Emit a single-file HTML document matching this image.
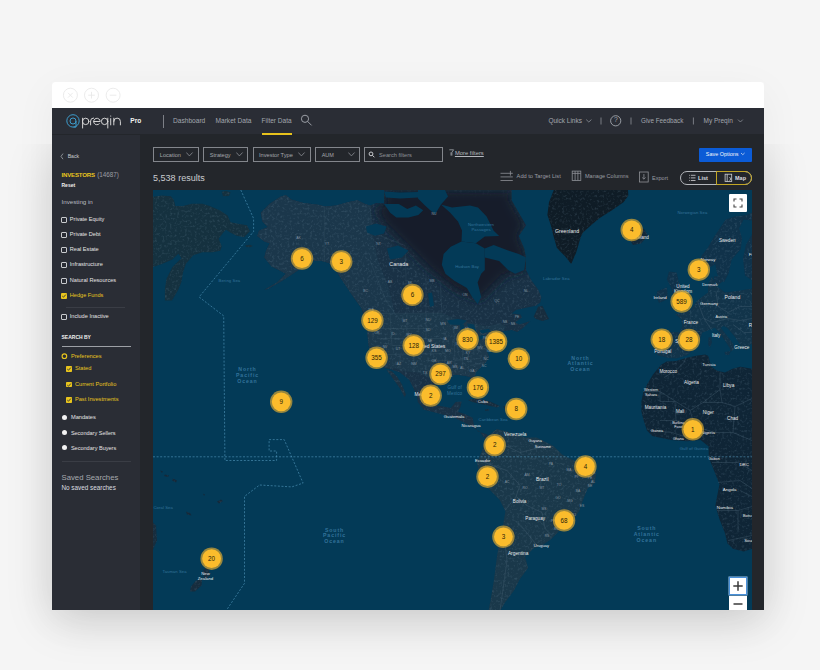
<!DOCTYPE html>
<html><head><meta charset="utf-8">
<style>
*{margin:0;padding:0;box-sizing:border-box}
html,body{width:820px;height:670px;overflow:hidden;background:#f5f5f5;font-family:"Liberation Sans",sans-serif}
.a{position:absolute}
.t{position:absolute;white-space:nowrap;line-height:1}
</style></head><body>
<div class="a" style="left:52px;top:82px;width:712px;height:528px;box-shadow:0 10px 40px rgba(0,0,0,.05)"></div>
<div class="a" style="left:52px;top:144px;width:712px;height:466px;box-shadow:0 10px 44px rgba(0,0,0,.15);clip-path:inset(0 -80px -80px -80px)"></div>
<div class="a" style="left:52px;top:82px;width:712px;height:27px;background:#fff;border-radius:4px 4px 0 0"></div>
<svg class="a" style="left:52px;top:82px" width="80" height="27" viewBox="52 82 80 27">
<g fill="none" stroke="#e9e9e9" stroke-width="0.9">
<circle cx="70.4" cy="95.2" r="7"/><circle cx="91.5" cy="95.2" r="7"/><circle cx="113.1" cy="95.2" r="7"/>
<path d="M68,92.8 L72.8,97.6 M72.8,92.8 L68,97.6 M91.5,91.9 V98.5 M88.2,95.2 H94.8 M109.8,95.2 H116.4"/>
</g></svg>
<div class="a" style="left:52px;top:108px;width:712px;height:26px;background:#2a2d35"></div>
<div class="a" style="left:52px;top:134.4px;width:712px;height:1px;background:#23262b"></div>
<div class="a" style="left:52px;top:135px;width:88px;height:475px;background:#2a2d35"></div>
<div class="a" style="left:140px;top:135px;width:624px;height:475px;background:#23262b"></div>
<svg class="a" style="left:60px;top:110px" width="70" height="22" viewBox="60 110 70 22">
<g fill="none" stroke="#3d9ccc" stroke-width="1">
<circle cx="73" cy="120.9" r="6.2"/>
<circle cx="73" cy="121" r="3"/>
<path d="M76,121 V127.1 H73.5"/>
</g>
<g fill="none" stroke="#dcdcdc" stroke-width="0.95" stroke-linecap="round">
<path d="M82.6,118.2 V128"/><circle cx="85.7" cy="121.4" r="3.2"/>
<path d="M90.6,124.9 V121 A3,3 0 0 1 93.6,118"/>
<path d="M93.8,121.5 H100.2 A3.25,3.25 0 1 0 99.3,123.8"/>
<circle cx="104.6" cy="121.4" r="3.2"/><path d="M107.8,118.2 V128"/>
<path d="M110.7,118.6 V124.9"/><circle cx="110.7" cy="116" r="0.6" fill="#e6e6e6" stroke="none"/>
<path d="M113.8,118.2 V124.9 M113.8,121.4 A3.3,3.3 0 0 1 120.4,121.4 V124.9"/>
</g></svg>
<div class="t" style="left:130.30px;top:118.01px;font-size:6.6px;color:#f2f2f2;font-weight:700;">Pro</div>
<div class="a" style="left:163px;top:114.5px;width:1px;height:13px;background:#7d8087"></div>
<div class="t" style="left:173.00px;top:118.01px;font-size:6.6px;color:#a3a7ae;font-weight:400;">Dashboard</div>
<div class="t" style="left:215.50px;top:118.01px;font-size:6.6px;color:#a3a7ae;font-weight:400;">Market Data</div>
<div class="t" style="left:261.60px;top:118.10px;font-size:6.5px;color:#a3a7ae;font-weight:400;">Filter Data</div>
<div class="a" style="left:261.6px;top:133px;width:30px;height:1.5px;background:#e7c21c"></div>
<svg class="a" style="left:298px;top:112px" width="18" height="16" viewBox="298 112 18 16">
<g fill="none" stroke="#9a9ea5" stroke-width="1"><circle cx="305" cy="118.8" r="3.6"/><path d="M307.6,121.4 L311.6,125.4"/></g></svg>
<div class="t" style="left:548.40px;top:118.10px;font-size:6.5px;color:#a3a7ae;font-weight:400;">Quick Links</div>
<svg class="a" style="left:540px;top:110px" width="220" height="22" viewBox="540 110 220 22">
<g fill="none" stroke="#8d9198" stroke-width="0.8">
<path d="M586.2,119.6 L588.8,122 L591.4,119.6"/>
<path d="M738,119.6 L740.4,122 L742.8,119.6"/>
</g>
<g fill="none" stroke="#a3a7ae" stroke-width="0.9">
<circle cx="615.7" cy="120.8" r="5.1"/>
</g>
<path d="M601,117.5 V124.5 M631,117.5 V124.5 M693.4,117.5 V124.5" stroke="#8d9198" stroke-width="0.8"/>
</svg>
<div class="t" style="left:613.90px;top:117.44px;font-size:6.8px;color:#a3a7ae;font-weight:400;">?</div>
<div class="t" style="left:641.00px;top:118.27px;font-size:6.3px;color:#a3a7ae;font-weight:400;">Give Feedback</div>
<div class="t" style="left:703.50px;top:118.10px;font-size:6.5px;color:#a3a7ae;font-weight:400;">My Preqin</div>
<svg class="a" style="left:58px;top:150px" width="10" height="12" viewBox="58 150 10 12">
<path d="M63,153.6 L61,156.4 L63,159.2" fill="none" stroke="#a0a4aa" stroke-width="0.8"/></svg>
<div class="t" style="left:67.70px;top:153.94px;font-size:5.15px;color:#c9cbcf;font-weight:400;">Back</div>
<div class="t" style="left:61.50px;top:172.44px;font-size:6.1px;color:#e9c51d;font-weight:700;letter-spacing:-0.2px">INVESTORS</div>
<div class="t" style="left:97.20px;top:172.27px;font-size:6.3px;color:#9b9ea4;font-weight:400;">(14687)</div>
<div class="t" style="left:61.50px;top:183.07px;font-size:5.0px;color:#f0f0f0;font-weight:700;">Reset</div>
<div class="t" style="left:61.50px;top:199.35px;font-size:6.2px;color:#b9bcc1;font-weight:400;">Investing in</div>
<div class="a" style="left:61px;top:216.5px;width:6px;height:6px;border:0.9px solid #c8cacd;border-radius:1px"></div>
<div class="t" style="left:69.80px;top:216.66px;font-size:5.6px;color:#e4e4e4;font-weight:400;">Private Equity</div>
<div class="a" style="left:61px;top:231.6px;width:6px;height:6px;border:0.9px solid #c8cacd;border-radius:1px"></div>
<div class="t" style="left:69.80px;top:231.76px;font-size:5.6px;color:#e4e4e4;font-weight:400;">Private Debt</div>
<div class="a" style="left:61px;top:247.0px;width:6px;height:6px;border:0.9px solid #c8cacd;border-radius:1px"></div>
<div class="t" style="left:69.80px;top:247.16px;font-size:5.6px;color:#e4e4e4;font-weight:400;">Real Estate</div>
<div class="a" style="left:61px;top:262.09999999999997px;width:6px;height:6px;border:0.9px solid #c8cacd;border-radius:1px"></div>
<div class="t" style="left:69.80px;top:262.26px;font-size:5.6px;color:#e4e4e4;font-weight:400;">Infrastructure</div>
<div class="a" style="left:61px;top:277.5px;width:6px;height:6px;border:0.9px solid #c8cacd;border-radius:1px"></div>
<div class="t" style="left:69.80px;top:277.66px;font-size:5.6px;color:#e4e4e4;font-weight:400;">Natural Resources</div>
<div class="a" style="left:61px;top:292.8px;width:6px;height:6px;background:#e9c51d;border-radius:1px"></div>
<svg class="a" style="left:61px;top:292.8px" width="6" height="6" viewBox="0 0 6 6"><path d="M1.3,3.1 L2.5,4.2 L4.8,1.6" fill="none" stroke="#2b2e37" stroke-width="0.9"/></svg>
<div class="t" style="left:69.80px;top:292.96px;font-size:5.6px;color:#e9c51d;font-weight:400;">Hedge Funds</div>
<div class="a" style="left:66px;top:307px;width:59px;height:1px;background:#3a3d45"></div>
<div class="a" style="left:61px;top:314.09999999999997px;width:6px;height:6px;border:0.9px solid #c8cacd;border-radius:1px"></div>
<div class="t" style="left:69.80px;top:314.26px;font-size:5.6px;color:#e4e4e4;font-weight:400;">Include Inactive</div>
<div class="t" style="left:61.50px;top:335.37px;font-size:5.0px;color:#f0f0f0;font-weight:700;">SEARCH BY</div>
<div class="a" style="left:61.5px;top:345.5px;width:69px;height:1.2px;background:#9da0a6"></div>
<svg class="a" style="left:60px;top:352px" width="9" height="9" viewBox="60 352 9 9"><circle cx="64.4" cy="356.2" r="2.3" fill="none" stroke="#e9c51d" stroke-width="1.1"/></svg>
<div class="t" style="left:70.90px;top:353.67px;font-size:5.7px;color:#e9c51d;font-weight:400;">Preferences</div>
<div class="a" style="left:65.7px;top:366.20000000000005px;width:5.9px;height:5.9px;background:#e9c51d;border-radius:0.8px"></div>
<svg class="a" style="left:65.7px;top:366.20000000000005px" width="6" height="6" viewBox="0 0 6 6"><path d="M1.3,3.1 L2.5,4.2 L4.8,1.6" fill="none" stroke="#2b2e37" stroke-width="0.9"/></svg>
<div class="t" style="left:74.90px;top:366.47px;font-size:5.7px;color:#e9c51d;font-weight:400;">Stated</div>
<div class="a" style="left:65.7px;top:381.5px;width:5.9px;height:5.9px;background:#e9c51d;border-radius:0.8px"></div>
<svg class="a" style="left:65.7px;top:381.5px" width="6" height="6" viewBox="0 0 6 6"><path d="M1.3,3.1 L2.5,4.2 L4.8,1.6" fill="none" stroke="#2b2e37" stroke-width="0.9"/></svg>
<div class="t" style="left:74.90px;top:381.77px;font-size:5.7px;color:#e9c51d;font-weight:400;">Current Portfolio</div>
<div class="a" style="left:65.7px;top:396.8px;width:5.9px;height:5.9px;background:#e9c51d;border-radius:0.8px"></div>
<svg class="a" style="left:65.7px;top:396.8px" width="6" height="6" viewBox="0 0 6 6"><path d="M1.3,3.1 L2.5,4.2 L4.8,1.6" fill="none" stroke="#2b2e37" stroke-width="0.9"/></svg>
<div class="t" style="left:74.90px;top:397.07px;font-size:5.7px;color:#e9c51d;font-weight:400;">Past Investments</div>
<div class="a" style="left:61.7px;top:414.5px;width:5.4px;height:5.4px;background:#f2f2f2;border-radius:50%"></div>
<div class="t" style="left:70.90px;top:415.07px;font-size:5.7px;color:#e4e4e4;font-weight:400;">Mandates</div>
<div class="a" style="left:61.7px;top:429.8px;width:5.4px;height:5.4px;background:#f2f2f2;border-radius:50%"></div>
<div class="t" style="left:70.90px;top:430.54px;font-size:5.5px;color:#e4e4e4;font-weight:400;">Secondary Sellers</div>
<div class="a" style="left:61.7px;top:445.1px;width:5.4px;height:5.4px;background:#f2f2f2;border-radius:50%"></div>
<div class="t" style="left:70.90px;top:445.80px;font-size:5.55px;color:#e4e4e4;font-weight:400;">Secondary Buyers</div>
<div class="a" style="left:61.5px;top:461.2px;width:69px;height:1px;background:#3a3d45"></div>
<div class="t" style="left:61.50px;top:473.84px;font-size:7.75px;color:#a6a9ae;font-weight:400;">Saved Searches</div>
<div class="t" style="left:61.50px;top:484.82px;font-size:6.35px;color:#dcdde0;font-weight:400;">No saved searches</div>
<div class="a" style="left:153px;top:147.3px;width:45.80000000000001px;height:14.6px;border:1px solid #83868c"></div>
<div class="t" style="left:159.80px;top:152.96px;font-size:5.6px;color:#a3a6ab;font-weight:400;">Location</div>
<svg class="a" style="left:186px;top:151px" width="8" height="7" viewBox="0 0 8 7"><path d="M0.3,1.5 L3.4,4.9 L6.6,1.5" fill="none" stroke="#8e9197" stroke-width="0.8"/></svg>
<div class="a" style="left:203px;top:147.3px;width:45px;height:14.6px;border:1px solid #83868c"></div>
<div class="t" style="left:209.80px;top:152.96px;font-size:5.6px;color:#a3a6ab;font-weight:400;">Strategy</div>
<svg class="a" style="left:235.7px;top:151px" width="8" height="7" viewBox="0 0 8 7"><path d="M0.3,1.5 L3.4,4.9 L6.6,1.5" fill="none" stroke="#8e9197" stroke-width="0.8"/></svg>
<div class="a" style="left:252.6px;top:147.3px;width:58.00000000000003px;height:14.6px;border:1px solid #83868c"></div>
<div class="t" style="left:258.90px;top:152.87px;font-size:5.7px;color:#a3a6ab;font-weight:400;">Investor Type</div>
<svg class="a" style="left:298.4px;top:151px" width="8" height="7" viewBox="0 0 8 7"><path d="M0.3,1.5 L3.4,4.9 L6.6,1.5" fill="none" stroke="#8e9197" stroke-width="0.8"/></svg>
<div class="a" style="left:315.4px;top:147.3px;width:44.400000000000034px;height:14.6px;border:1px solid #83868c"></div>
<div class="t" style="left:321.70px;top:153.04px;font-size:5.5px;color:#a3a6ab;font-weight:400;">AUM</div>
<svg class="a" style="left:348px;top:151px" width="8" height="7" viewBox="0 0 8 7"><path d="M0.3,1.5 L3.4,4.9 L6.6,1.5" fill="none" stroke="#8e9197" stroke-width="0.8"/></svg>
<div class="a" style="left:364.4px;top:147.3px;width:78.3px;height:14.6px;border:1px solid #83868c"></div>
<svg class="a" style="left:367px;top:150px" width="10" height="10" viewBox="367 150 10 10"><g fill="none" stroke="#c9cbcf" stroke-width="1"><circle cx="371" cy="153.9" r="1.9"/><path d="M372.4,155.3 L374.4,157.3"/></g></svg>
<div class="t" style="left:379.00px;top:153.12px;font-size:5.65px;color:#8e9197;font-weight:400;">Search filters</div>
<svg class="a" style="left:448px;top:148px" width="7" height="9" viewBox="448 148 7 9"><path d="M449.3,149.8 H453.6 L451.9,152.3 V155.6 M451,152.3 V155.6" fill="none" stroke="#b5b8bd" stroke-width="0.7"/></svg>
<div class="t" style="left:454.90px;top:150.95px;font-size:5.85px;color:#b5b8bd;font-weight:400;text-decoration:underline;text-underline-offset:1px">More filters</div>
<div class="a" style="left:699px;top:147.5px;width:53px;height:14px;background:#0b5bd6;border-radius:1px"></div>
<div class="t" style="left:705.80px;top:152.29px;font-size:5.45px;color:#f4f6fa;font-weight:400;">Save Options</div>
<svg class="a" style="left:740px;top:152px" width="6" height="5" viewBox="740 152 6 5"><path d="M741,153 L742.8,154.7 L744.6,153" fill="none" stroke="#dfe6f5" stroke-width="0.7"/></svg>
<div class="t" style="left:153.00px;top:174.24px;font-size:9.05px;color:#c9cbcf;font-weight:400;">5,538 results</div>
<svg class="a" style="left:498px;top:168px" width="180" height="18" viewBox="498 168 180 18">
<g fill="none" stroke="#8e9197" stroke-width="0.8">
<path d="M500.5,173.3 H508 M500.5,176.9 H512.8 M500.5,180.5 H512.8 M510.4,170.9 V175.6 M508,173.3 H512.8"/>
<rect x="572.2" y="171.1" width="8.6" height="9.4"/><path d="M575.1,171.1 V180.5 M577.9,171.1 V180.5 M572.2,173.4 H580.8"/>
<rect x="639.6" y="172" width="8.6" height="10"/><path d="M643.9,174 V179 M642.2,177.5 L643.9,179.2 L645.6,177.5"/>
</g></svg>
<div class="t" style="left:516.60px;top:173.77px;font-size:5.7px;color:#9a9da3;font-weight:400;">Add to Target List</div>
<div class="t" style="left:585.00px;top:173.90px;font-size:5.55px;color:#9a9da3;font-weight:400;">Manage Columns</div>
<div class="t" style="left:652.00px;top:175.50px;font-size:5.55px;color:#9a9da3;font-weight:400;">Export</div>
<div class="a" style="left:679.8px;top:171.3px;width:72.1px;height:13.5px;border:1px solid #b4b7bc;border-radius:7px"></div>
<div class="a" style="left:715.7px;top:171.3px;width:36.2px;height:13.5px;border:1px solid #c2a625;border-radius:0 7px 7px 0"></div>
<svg class="a" style="left:686px;top:172px" width="50" height="12" viewBox="686 172 50 12">
<g fill="none" stroke="#d0d2d5" stroke-width="0.8">
<path d="M691,175.3 H695.5 M691,177.9 H695.5 M691,180.5 H695.5"/>
<path d="M689.2,175.3 H690.2 M689.2,177.9 H690.2 M689.2,180.5 H690.2"/>
<rect x="725.1" y="174.2" width="6.6" height="7.4"/><path d="M727.2,174.2 V181.6 M729.3,177.5 A1.4,1.4 0 1 1 729.3,180.3"/>
</g></svg>
<div class="t" style="left:698.00px;top:175.86px;font-size:5.6px;color:#dcdde0;font-weight:700;">List</div>
<div class="t" style="left:735.00px;top:175.94px;font-size:5.5px;color:#dcdde0;font-weight:700;">Map</div>
<div class="a" style="left:153px;top:189.5px;width:599px;height:420.5px;background:#033a57"></div>
<svg class="a" style="left:153px;top:189.5px" width="599" height="420.5" viewBox="153 189.5 599 420.5">
<defs><filter id="tex" x="0" y="0" width="1" height="1" color-interpolation-filters="sRGB"><feTurbulence type="fractalNoise" baseFrequency="0.4" numOctaves="2" seed="7" result="n"/><feColorMatrix in="n" type="matrix" values="0 0 0 0 0.50  0 0 0 0 0.62  0 0 0 0 0.70  0 0 0 0.55 -0.28" result="c"/><feComposite in="c" in2="SourceAlpha" operator="in" result="m"/><feMerge><feMergeNode in="SourceGraphic"/><feMergeNode in="m"/></feMerge></filter></defs>
<path d="M153.0,196.2 L162.0,195.0 L170.9,195.7 L173.9,199.4 L175.4,205.4 L182.9,205.4 L191.8,203.2 L202.3,203.2 L209.7,205.4 L220.2,209.9 L227.6,215.1 L230.6,221.8 L238.1,223.3 L247.0,224.8 L250.0,230.8 L244.0,236.8 L236.6,235.3 L230.6,232.3 L226.1,229.3 L223.1,232.3 L218.7,238.3 L221.7,245.7 L220.2,250.2 L212.7,251.7 L202.3,251.7 L193.3,254.7 L185.8,263.6 L182.9,272.6 L181.4,281.5 L178.4,289.0 L172.0,300.0 L164.9,300.0 L164.9,289.0 L166.4,278.6 L172.4,266.6 L181.4,257.7 L178.4,253.2 L172.4,259.1 L162.0,263.6 L153.0,266.6Z" fill="#15313f"  filter="url(#tex)"/>
<path d="M221.7,191.2 L226.0,190.5 L230.6,192.0 L229.0,195.5 L223.0,195.7Z" fill="#15313f"  filter="url(#tex)"/>
<path d="M245.5,244.8 L250.0,244.2 L253.0,245.5 L250.0,246.8 L246.0,246.5Z" fill="#15313f"  filter="url(#tex)"/>
<path d="M260.7,212.3 L269.7,203.3 L280.4,196.2 L285.8,194.4 L291.2,198.9 L303.7,202.4 L318.1,204.2 L325.2,206.0 L336.0,205.1 L348.5,201.5 L357.5,199.7 L364.6,203.3 L370.0,205.1 L376.0,202.5 L384.1,203.0 L384.1,189.5 L511.6,189.5 L511.6,199.7 L526.0,224.8 L518.8,235.6 L524.2,248.1 L526.0,257.0 L526.0,269.6 L531.5,280.0 L538.0,288.8 L541.4,296.5 L540.3,302.0 L535.9,305.2 L524.9,307.4 L516.1,309.6 L511.7,312.9 L520.5,314.0 L522.0,317.0 L515.0,322.0 L519.4,323.9 L530.4,320.5 L522.7,327.8 L517.2,331.6 L511.7,329.4 L503.7,330.6 L496.0,334.0 L492.0,338.0 L490.0,343.0 L486.9,350.7 L489.1,356.3 L485.8,361.9 L480.2,367.5 L475.7,372.0 L474.6,377.6 L477.0,384.0 L479.5,390.0 L479.0,396.0 L476.0,392.0 L472.5,384.0 L470.1,376.5 L464.5,375.3 L456.7,374.2 L450.0,375.3 L443.4,380.7 L434.9,384.4 L432.4,391.7 L433.7,400.2 L437.3,405.1 L444.6,406.3 L450.7,407.6 L455.6,401.5 L461.7,400.9 L460.5,406.3 L458.0,411.2 L465.4,413.7 L472.7,417.3 L474.0,425.0 L478.0,431.0 L486.0,433.5 L490.0,436.0 L489.3,439.0 L483.4,436.5 L480.0,431.5 L472.7,426.5 L462.9,421.5 L453.2,416.6 L443.4,414.2 L433.7,411.7 L423.9,409.3 L417.8,401.5 L416.6,394.1 L409.3,379.5 L400.0,372.0 L391.0,369.0 L385.9,367.8 L381.0,366.0 L376.0,363.0 L371.2,355.5 L368.8,345.6 L367.9,339.0 L367.1,329.2 L364.7,319.3 L361.4,307.8 L353.2,296.3 L346.6,286.4 L340.0,276.6 L334.2,267.8 L328.8,262.4 L321.6,260.6 L312.7,260.6 L303.7,266.0 L293.0,273.2 L282.2,280.3 L267.9,288.4 L264.3,289.3 L276.9,282.1 L285.8,273.2 L278.7,269.6 L271.5,266.0 L264.3,257.1 L266.1,249.9 L269.7,242.7 L264.3,241.0 L257.2,235.6 L259.0,230.2 L267.9,226.6 L262.5,221.2Z" fill="#193145"  filter="url(#tex)"/>
<path d="M260.7,212.3 L269.7,203.3 L280.4,196.2 L285.8,194.4 L291.2,198.9 L303.7,202.4 L318.1,204.2 L325.2,206.0 L336.0,205.1 L348.5,201.5 L357.5,199.7 L364.6,203.3 L370.0,205.1 L372.0,230.0 L378.0,260.0 L388.0,285.0 L395.0,313.5 L364.5,313.5 L361.4,307.8 L353.2,296.3 L346.6,286.4 L340.0,276.6 L334.2,267.8 L328.8,262.4 L321.6,260.6 L312.7,260.6 L303.7,266.0 L293.0,273.2 L282.2,280.3 L267.9,288.4 L264.3,289.3 L276.9,282.1 L285.8,273.2 L278.7,269.6 L271.5,266.0 L264.3,257.1 L266.1,249.9 L269.7,242.7 L264.3,241.0 L257.2,235.6 L259.0,230.2 L267.9,226.6 L262.5,221.2Z" fill="#1b374b"  filter="url(#tex)"/>
<defs><filter id="bl" x="-20%" y="-20%" width="140%" height="140%"><feGaussianBlur stdDeviation="5"/></filter><clipPath id="nac"><path d="M260.7,212.3 L269.7,203.3 L280.4,196.2 L285.8,194.4 L291.2,198.9 L303.7,202.4 L318.1,204.2 L325.2,206.0 L336.0,205.1 L348.5,201.5 L357.5,199.7 L364.6,203.3 L370.0,205.1 L376.0,202.5 L384.1,203.0 L384.1,189.5 L511.6,189.5 L511.6,199.7 L526.0,224.8 L518.8,235.6 L524.2,248.1 L526.0,257.0 L526.0,269.6 L531.5,280.0 L538.0,288.8 L541.4,296.5 L540.3,302.0 L535.9,305.2 L524.9,307.4 L516.1,309.6 L511.7,312.9 L520.5,314.0 L522.0,317.0 L515.0,322.0 L519.4,323.9 L530.4,320.5 L522.7,327.8 L517.2,331.6 L511.7,329.4 L503.7,330.6 L496.0,334.0 L492.0,338.0 L490.0,343.0 L486.9,350.7 L489.1,356.3 L485.8,361.9 L480.2,367.5 L475.7,372.0 L474.6,377.6 L477.0,384.0 L479.5,390.0 L479.0,396.0 L476.0,392.0 L472.5,384.0 L470.1,376.5 L464.5,375.3 L456.7,374.2 L450.0,375.3 L443.4,380.7 L434.9,384.4 L432.4,391.7 L433.7,400.2 L437.3,405.1 L444.6,406.3 L450.7,407.6 L455.6,401.5 L461.7,400.9 L460.5,406.3 L458.0,411.2 L465.4,413.7 L472.7,417.3 L474.0,425.0 L478.0,431.0 L486.0,433.5 L490.0,436.0 L489.3,439.0 L483.4,436.5 L480.0,431.5 L472.7,426.5 L462.9,421.5 L453.2,416.6 L443.4,414.2 L433.7,411.7 L423.9,409.3 L417.8,401.5 L416.6,394.1 L409.3,379.5 L400.0,372.0 L391.0,369.0 L385.9,367.8 L381.0,366.0 L376.0,363.0 L371.2,355.5 L368.8,345.6 L367.9,339.0 L367.1,329.2 L364.7,319.3 L361.4,307.8 L353.2,296.3 L346.6,286.4 L340.0,276.6 L334.2,267.8 L328.8,262.4 L321.6,260.6 L312.7,260.6 L303.7,266.0 L293.0,273.2 L282.2,280.3 L267.9,288.4 L264.3,289.3 L276.9,282.1 L285.8,273.2 L278.7,269.6 L271.5,266.0 L264.3,257.1 L266.1,249.9 L269.7,242.7 L264.3,241.0 L257.2,235.6 L259.0,230.2 L267.9,226.6 L262.5,221.2Z" fill="#000" /></clipPath></defs>
<g clip-path="url(#nac)"><path d="M384.1,189.5 L511.6,189.5 L511.6,199.7 L526.0,224.8 L518.8,235.6 L524.2,248.1 L526.0,257.0 L526.0,269.6 L505.0,275.0 L480.0,300.0 L455.0,290.0 L430.0,270.0 L405.0,245.0 L385.0,225.0 L376.0,210.0 L384.1,203.0Z" fill="#121e2a" filter="url(#bl)"/></g>
<path d="M364.5,313.5 L442.0,312.5 L455.0,318.0 L470.0,322.0 L486.0,326.0 L500.0,323.0 L506.0,326.0 L503.7,330.6 L496.0,334.0 L492.0,338.0 L490.0,343.0 L486.9,350.7 L489.1,356.3 L485.8,361.9 L480.2,367.5 L475.7,372.0 L474.6,377.6 L477.0,384.0 L479.5,390.0 L479.0,396.0 L476.0,392.0 L472.5,384.0 L470.1,376.5 L464.5,375.3 L456.7,374.2 L450.0,375.3 L443.4,380.7 L434.9,384.4 L430.0,378.0 L418.0,372.0 L405.0,371.0 L395.0,368.0 L385.9,367.8 L381.0,366.0 L376.0,363.0 L371.2,355.5 L368.8,345.6 L367.9,339.0 L367.1,329.2 L364.7,319.3Z" fill="#1c384b"  filter="url(#tex)"/>
<path d="M386.5,369.5 L390.0,374.0 L395.0,381.0 L400.0,388.0 L404.5,396.6 L406.0,394.0 L402.0,384.0 L397.0,376.0 L391.5,370.5Z" fill="#1a3244"  filter="url(#tex)"/>
<path d="M369.3,313.0 L442.0,312.5" fill="none" stroke="#51697a" stroke-width="0.45" opacity="0.4"/>
<path d="M390.0,313.0 L392.0,345.0" fill="none" stroke="#51697a" stroke-width="0.45" opacity="0.4"/>
<path d="M407.0,313.0 L407.0,335.0" fill="none" stroke="#51697a" stroke-width="0.45" opacity="0.4"/>
<path d="M426.0,313.0 L426.0,340.0" fill="none" stroke="#51697a" stroke-width="0.45" opacity="0.4"/>
<path d="M379.0,328.0 L426.0,328.0" fill="none" stroke="#51697a" stroke-width="0.45" opacity="0.4"/>
<path d="M377.0,338.0 L445.0,338.0" fill="none" stroke="#51697a" stroke-width="0.45" opacity="0.4"/>
<path d="M392.0,345.0 L420.0,345.0" fill="none" stroke="#51697a" stroke-width="0.45" opacity="0.4"/>
<path d="M386.0,354.0 L445.0,353.0" fill="none" stroke="#51697a" stroke-width="0.45" opacity="0.4"/>
<path d="M400.0,354.0 L400.0,368.0" fill="none" stroke="#51697a" stroke-width="0.45" opacity="0.4"/>
<path d="M414.0,353.0 L414.0,372.0" fill="none" stroke="#51697a" stroke-width="0.45" opacity="0.4"/>
<path d="M420.0,345.0 L420.0,360.0" fill="none" stroke="#51697a" stroke-width="0.45" opacity="0.4"/>
<path d="M426.0,360.0 L449.0,360.0" fill="none" stroke="#51697a" stroke-width="0.45" opacity="0.4"/>
<path d="M445.0,330.0 L445.0,372.0" fill="none" stroke="#51697a" stroke-width="0.45" opacity="0.4"/>
<path d="M454.0,325.0 L455.0,366.0" fill="none" stroke="#51697a" stroke-width="0.45" opacity="0.4"/>
<path d="M463.0,338.0 L462.0,372.0" fill="none" stroke="#51697a" stroke-width="0.45" opacity="0.4"/>
<path d="M466.0,350.0 L490.0,348.0" fill="none" stroke="#51697a" stroke-width="0.45" opacity="0.4"/>
<path d="M472.0,338.0 L474.0,352.0" fill="none" stroke="#51697a" stroke-width="0.45" opacity="0.4"/>
<path d="M455.0,360.0 L480.0,358.0" fill="none" stroke="#51697a" stroke-width="0.45" opacity="0.4"/>
<path d="M470.0,365.0 L484.0,362.0" fill="none" stroke="#51697a" stroke-width="0.45" opacity="0.4"/>
<path d="M486.0,334.0 L500.0,334.0" fill="none" stroke="#51697a" stroke-width="0.45" opacity="0.4"/>
<path d="M370.0,260.0 L386.0,300.0" fill="none" stroke="#51697a" stroke-width="0.45" opacity="0.4"/>
<path d="M386.0,300.0 L395.0,313.0" fill="none" stroke="#51697a" stroke-width="0.45" opacity="0.4"/>
<path d="M405.0,245.0 L407.0,313.0" fill="none" stroke="#51697a" stroke-width="0.45" opacity="0.4"/>
<path d="M426.0,270.0 L426.0,313.0" fill="none" stroke="#51697a" stroke-width="0.45" opacity="0.4"/>
<path d="M440.0,280.0 L442.0,312.0" fill="none" stroke="#51697a" stroke-width="0.45" opacity="0.4"/>
<path d="M324.3,206.0 L324.3,261.5" fill="none" stroke="#51697a" stroke-width="0.45" opacity="0.4"/>
<path d="M370.0,205.0 L372.0,232.0" fill="none" stroke="#51697a" stroke-width="0.45" opacity="0.4"/>
<path d="M372.0,232.0 L405.0,245.0" fill="none" stroke="#51697a" stroke-width="0.45" opacity="0.4"/>
<path d="M384.1,203.6 L398.8,203.6 L407.3,208.5 L415.9,204.9 L423.2,209.7 L418.3,214.6 L408.5,217.0 L396.3,217.0 L390.2,212.2Z" fill="#033a57" />
<path d="M384.0,191.0 L400.0,192.0 L418.0,191.5 L418.0,197.0 L400.0,198.0 L386.0,197.0Z" fill="#033a57" />
<path d="M418.0,189.5 L445.0,189.5 L448.0,196.0 L441.0,204.0 L435.0,214.0 L425.0,205.0 L418.0,198.0Z" fill="#033a57" />
<path d="M441.0,204.0 L452.0,207.0 L470.0,205.0 L478.0,207.0 L486.6,215.9 L493.7,230.2 L499.1,235.6 L484.8,236.0 L475.8,242.7 L461.5,241.0 L462.0,230.0 L458.0,221.0 L450.0,212.0Z" fill="#033a57" />
<path d="M366.0,226.0 L376.0,223.0 L386.6,226.0 L384.0,233.0 L375.0,235.3 L367.0,232.0Z" fill="#033a57" />
<path d="M387.0,248.0 L398.0,245.0 L408.5,250.0 L402.0,257.0 L390.0,259.0Z" fill="#033a57" />
<path d="M443.6,253.5 L450.7,246.3 L461.5,241.0 L475.8,242.7 L484.8,248.1 L484.8,269.6 L481.2,273.2 L477.6,282.1 L481.2,296.5 L477.6,303.6 L472.2,296.5 L466.9,287.5 L454.3,280.3 L445.4,273.2 L441.8,264.2Z" fill="#033a57" />
<path d="M484.8,248.1 L493.7,244.5 L508.1,249.9 L518.8,253.5 L526.0,257.1 L524.2,269.6 L515.2,273.2 L508.1,269.6 L499.1,260.6 L484.8,257.1Z" fill="#033a57" />
<path d="M447.0,320.0 L458.0,318.5 L467.0,320.0 L462.0,324.5 L450.0,324.0Z" fill="#033a57" />
<path d="M460.0,324.0 L464.0,324.0 L464.4,336.0 L461.0,338.0Z" fill="#033a57" />
<path d="M467.0,323.0 L474.0,324.0 L476.6,332.0 L470.0,333.0Z" fill="#033a57" />
<path d="M473.0,338.0 L482.0,334.6 L486.0,336.0 L477.0,340.7Z" fill="#033a57" />
<path d="M479.0,330.0 L489.0,328.5 L491.0,331.0 L482.0,333.0Z" fill="#033a57" />
<path d="M428.0,293.0 L432.0,292.0 L434.0,305.0 L430.0,306.6Z" fill="#033a57" />
<path d="M533.7,316.2 L538.1,306.3 L542.4,305.2 L549.0,318.4 L542.4,320.6 L535.9,318.4Z" fill="#172d3e"  filter="url(#tex)"/>
<path d="M468.0,399.5 L478.0,398.0 L490.0,401.0 L500.0,405.5 L497.0,407.0 L486.0,404.5 L472.0,401.5Z" fill="#172d3e"  filter="url(#tex)"/>
<path d="M503.0,406.0 L511.0,405.0 L514.0,408.0 L506.0,409.5Z" fill="#172d3e"  filter="url(#tex)"/>
<path d="M485.0,409.0 L489.0,408.5 L489.0,410.0 L485.0,410.2Z" fill="#172d3e"  filter="url(#tex)"/>
<path d="M553.8,189.5 L628.0,189.5 L628.3,195.3 L623.5,201.7 L612.4,209.6 L599.7,217.5 L590.2,225.5 L583.0,232.0 L580.7,236.5 L578.0,246.0 L576.0,252.4 L571.2,263.5 L564.9,255.6 L556.9,247.6 L553.8,236.5 L550.6,223.9 L547.4,214.4 L549.0,201.7Z" fill="#0f1c26"  filter="url(#tex)"/>
<path d="M628.0,236.5 L634.6,225.5 L644.1,228.6 L648.0,235.0 L641.0,242.9 L633.0,244.5Z" fill="#12283a"  filter="url(#tex)"/>
<path d="M485.5,437.0 L496.9,428.5 L508.2,431.3 L525.2,437.0 L536.6,437.0 L553.6,445.5 L562.1,454.0 L573.5,459.7 L584.8,465.4 L596.2,473.9 L594.8,482.4 L587.7,488.1 L582.0,502.3 L579.1,510.8 L570.6,522.1 L559.3,530.6 L550.8,539.1 L542.3,544.8 L533.8,547.7 L525.2,556.2 L528.1,567.5 L519.6,578.9 L513.9,590.2 L505.4,601.6 L499.7,611.0 L488.4,611.0 L491.2,595.9 L494.0,578.9 L496.9,556.2 L499.7,539.1 L502.6,527.8 L505.4,510.8 L499.7,499.4 L488.4,488.1 L479.9,476.7 L477.0,462.6 L482.7,448.4Z" fill="#1a384a"  filter="url(#tex)"/>
<path d="M652.5,331.0 L668.0,331.5 L679.9,331.7 L682.3,326.1 L681.1,318.6 L674.9,313.6 L682.3,312.4 L691.0,308.7 L697.3,300.0 L702.2,296.2 L708.0,292.0 L708.0,284.0 L712.0,276.0 L716.0,285.0 L725.0,292.0 L740.0,290.0 L752.0,288.0 L752.0,343.5 L749.5,344.7 L747.0,349.7 L742.0,348.5 L739.6,343.5 L734.6,336.0 L727.1,327.3 L723.4,325.4 L720.9,327.3 L724.6,332.3 L729.6,338.5 L733.3,343.5 L734.6,348.5 L730.8,351.0 L729.6,347.2 L724.6,339.8 L719.7,332.3 L714.7,327.3 L708.5,329.8 L702.2,332.3 L699.8,339.8 L694.8,347.2 L687.3,354.7 L676.1,358.0 L668.0,357.5 L657.5,354.7 L653.1,346.0Z" fill="#12344a"  filter="url(#tex)"/>
<path d="M708.5,337.0 L711.0,336.5 L712.0,342.0 L710.0,347.0 L708.2,344.0Z" fill="#10324a"  filter="url(#tex)"/>
<path d="M724.6,351.5 L730.8,350.5 L729.0,354.7 L725.0,354.0Z" fill="#10324a"  filter="url(#tex)"/>
<path d="M752.0,212.0 L746.6,214.4 L734.7,215.9 L725.7,218.9 L719.8,227.8 L713.8,236.8 L707.8,247.2 L701.9,254.7 L698.9,260.6 L701.9,266.6 L710.8,266.6 L715.3,263.6 L716.8,272.6 L719.8,280.0 L724.2,281.5 L728.7,272.6 L731.7,259.1 L740.7,248.7 L742.1,238.3 L739.2,227.8 L743.6,218.9 L752.0,220.0Z" fill="#10324a"  filter="url(#tex)"/>
<path d="M752.0,234.0 L746.0,244.0 L743.0,258.0 L745.0,275.0 L752.0,280.0Z" fill="#10324a"  filter="url(#tex)"/>
<path d="M713.8,276.0 L720.0,275.6 L722.7,281.0 L718.0,284.5 L714.0,282.0Z" fill="#10324a"  filter="url(#tex)"/>
<path d="M668.9,271.1 L676.7,272.1 L678.7,280.9 L682.6,290.7 L686.5,302.4 L680.6,306.3 L670.8,306.3 L674.8,298.5 L670.8,286.8 L666.9,279.0Z" fill="#10324a"  filter="url(#tex)"/>
<path d="M657.2,290.7 L667.0,286.8 L667.9,298.5 L659.1,302.4 L656.2,296.5Z" fill="#10324a"  filter="url(#tex)"/>
<path d="M660.8,364.4 L666.6,361.0 L676.0,360.5 L688.0,357.0 L697.7,355.0 L705.4,354.0 L708.3,355.6 L711.3,366.3 L717.1,370.2 L724.9,372.1 L732.6,368.3 L740.4,366.3 L752.0,368.3 L752.0,548.3 L743.7,551.0 L732.9,548.3 L727.5,542.9 L724.8,532.2 L719.5,518.7 L715.4,505.3 L716.8,497.2 L719.5,483.8 L714.1,470.3 L708.7,456.9 L708.7,446.1 L700.6,439.4 L687.2,440.8 L671.1,439.4 L652.3,435.4 L647.0,430.0 L643.3,418.7 L641.4,411.0 L641.4,401.3 L643.3,391.6 L647.2,383.8 L653.0,374.1Z" fill="#0f2536"  filter="url(#tex)"/>
<path d="M664.0,377.0 L676.0,370.0 L684.0,362.0 L686.0,357.0" fill="none" stroke="#50697b" stroke-width="0.5" opacity="0.65"/>
<path d="M643.0,391.0 L660.0,391.0 L660.0,401.0 L675.0,401.0 L676.0,420.0" fill="none" stroke="#50697b" stroke-width="0.5" opacity="0.65"/>
<path d="M660.0,391.0 L690.0,410.0 L703.0,402.0 L720.0,389.0 L720.0,372.0" fill="none" stroke="#50697b" stroke-width="0.5" opacity="0.65"/>
<path d="M720.0,389.0 L722.0,402.0" fill="none" stroke="#50697b" stroke-width="0.5" opacity="0.65"/>
<path d="M690.0,410.0 L695.0,426.0" fill="none" stroke="#50697b" stroke-width="0.5" opacity="0.65"/>
<path d="M703.0,402.0 L722.0,402.0 L735.0,406.0 L733.0,432.0" fill="none" stroke="#50697b" stroke-width="0.5" opacity="0.65"/>
<path d="M735.0,406.0 L752.0,398.0" fill="none" stroke="#50697b" stroke-width="0.5" opacity="0.65"/>
<path d="M695.0,426.0 L715.0,432.0 L733.0,432.0 L752.0,440.0" fill="none" stroke="#50697b" stroke-width="0.5" opacity="0.65"/>
<path d="M660.0,420.0 L676.0,420.0 L690.0,426.0" fill="none" stroke="#50697b" stroke-width="0.5" opacity="0.65"/>
<path d="M650.0,430.0 L672.0,432.0 L690.0,438.0" fill="none" stroke="#50697b" stroke-width="0.5" opacity="0.65"/>
<path d="M712.0,462.0 L738.0,462.0 L752.0,470.0" fill="none" stroke="#50697b" stroke-width="0.5" opacity="0.65"/>
<path d="M718.0,482.0 L740.0,480.0 L752.0,488.0" fill="none" stroke="#50697b" stroke-width="0.5" opacity="0.65"/>
<path d="M717.0,510.0 L738.0,510.0 L752.0,506.0" fill="none" stroke="#50697b" stroke-width="0.5" opacity="0.65"/>
<path d="M738.0,510.0 L738.0,532.0" fill="none" stroke="#50697b" stroke-width="0.5" opacity="0.65"/>
<path d="M728.0,540.0 L752.0,535.0" fill="none" stroke="#50697b" stroke-width="0.5" opacity="0.65"/>
<path d="M740.0,490.0 L752.0,496.0" fill="none" stroke="#50697b" stroke-width="0.5" opacity="0.65"/>
<path d="M680.0,332.0 L700.0,331.0" fill="none" stroke="#50697b" stroke-width="0.5" opacity="0.65"/>
<path d="M698.0,302.0 L704.0,318.0 L712.0,322.0" fill="none" stroke="#50697b" stroke-width="0.5" opacity="0.65"/>
<path d="M716.0,291.0 L718.0,306.0 L728.0,312.0" fill="none" stroke="#50697b" stroke-width="0.5" opacity="0.65"/>
<path d="M712.0,322.0 L728.0,318.0 L740.0,320.0 L752.0,318.0" fill="none" stroke="#50697b" stroke-width="0.5" opacity="0.65"/>
<path d="M704.0,318.0 L712.0,330.0" fill="none" stroke="#50697b" stroke-width="0.5" opacity="0.65"/>
<path d="M728.0,312.0 L740.0,306.0 L752.0,306.0" fill="none" stroke="#50697b" stroke-width="0.5" opacity="0.65"/>
<path d="M733.0,324.0 L744.0,332.0 L752.0,332.0" fill="none" stroke="#50697b" stroke-width="0.5" opacity="0.65"/>
<path d="M505.0,445.0 L520.0,452.0 L540.0,447.0 L553.0,446.0" fill="none" stroke="#50697b" stroke-width="0.5" opacity="0.65"/>
<path d="M480.0,460.0 L495.0,466.0 L507.0,470.0 L520.0,485.0 L516.0,496.0 L527.0,505.0" fill="none" stroke="#50697b" stroke-width="0.5" opacity="0.65"/>
<path d="M505.0,510.0 L516.0,496.0" fill="none" stroke="#50697b" stroke-width="0.5" opacity="0.65"/>
<path d="M527.0,505.0 L542.0,512.0 L545.0,528.0" fill="none" stroke="#50697b" stroke-width="0.5" opacity="0.65"/>
<path d="M515.0,520.0 L525.0,530.0 L537.0,545.0" fill="none" stroke="#50697b" stroke-width="0.5" opacity="0.65"/>
<path d="M503.0,527.0 L507.0,560.0 L500.0,610.0" fill="none" stroke="#50697b" stroke-width="0.5" opacity="0.65"/>
<path d="M545.0,528.0 L552.0,535.0" fill="none" stroke="#50697b" stroke-width="0.5" opacity="0.65"/>
<path d="M203.0,570.0 L208.0,566.0 L210.0,575.0 L204.0,580.0Z" fill="#172d3e"  filter="url(#tex)"/>
<path d="M196.0,580.0 L202.0,579.0 L201.5,585.0 L195.0,591.0 L190.0,591.0 L191.0,586.0Z" fill="#172d3e"  filter="url(#tex)"/>
<path d="M160.0,470.0 L163.0,471.0 L162.0,472.5Z" fill="#15293a"  filter="url(#tex)"/>
<path d="M165.0,474.0 L169.0,475.0 L168.0,476.5 L164.0,475.5Z" fill="#15293a"  filter="url(#tex)"/>
<path d="M173.0,478.0 L177.0,480.0 L176.0,482.0 L172.0,480.0Z" fill="#15293a"  filter="url(#tex)"/>
<path d="M186.0,511.0 L190.0,512.5 L191.5,515.0 L187.0,514.0Z" fill="#15293a"  filter="url(#tex)"/>
<path d="M217.0,501.0 L221.0,499.0 L223.0,500.5 L219.0,503.0Z" fill="#15293a"  filter="url(#tex)"/>
<path d="M203.0,493.0 L205.0,494.0 L204.0,495.5Z" fill="#15293a"  filter="url(#tex)"/>
<path d="M153.0,522.0 L156.0,525.0 L157.0,540.0 L153.0,549.0Z" fill="#172d3e"  filter="url(#tex)"/>
<path d="M240.8,189.5 L253.6,218.0 L253.6,231.0 L199.1,296.5 L223.7,315.4 L224.9,460.0 L276.6,460.0 L276.6,450.5 L269.1,450.5 L269.1,439.1 L284.2,439.1 L303.1,482.6 L291.8,486.4 L259.6,484.5 L244.5,495.9 L244.5,582.8 L225.6,611.0" fill="none" stroke="#5fa9cf" stroke-width="0.7" stroke-dasharray="2,1.6" opacity="0.75"/>
<path d="M153.0,456.3 L752.0,456.3" fill="none" stroke="#5fa9cf" stroke-width="0.7" stroke-dasharray="2,1.6" opacity="0.75"/>
</svg>
<svg class="a" style="left:153px;top:189.5px" width="599" height="420.5" viewBox="153 189.5 599 420.5" font-family="Liberation Sans, sans-serif">
<text x="247.5" y="370.6" font-size="5.2" fill="#33739a" text-anchor="middle" font-weight="700" letter-spacing="0.9">North</text>
<text x="247.5" y="376.4" font-size="5.2" fill="#33739a" text-anchor="middle" font-weight="700" letter-spacing="0.9">Pacific</text>
<text x="247.5" y="382.2" font-size="5.2" fill="#33739a" text-anchor="middle" font-weight="700" letter-spacing="0.9">Ocean</text>
<text x="334.5" y="531.1" font-size="5.2" fill="#33739a" text-anchor="middle" font-weight="700" letter-spacing="0.9">South</text>
<text x="334.5" y="536.9" font-size="5.2" fill="#33739a" text-anchor="middle" font-weight="700" letter-spacing="0.9">Pacific</text>
<text x="334.5" y="542.7" font-size="5.2" fill="#33739a" text-anchor="middle" font-weight="700" letter-spacing="0.9">Ocean</text>
<text x="580.5" y="359.1" font-size="5.2" fill="#33739a" text-anchor="middle" font-weight="700" letter-spacing="0.9">North</text>
<text x="580.5" y="364.9" font-size="5.2" fill="#33739a" text-anchor="middle" font-weight="700" letter-spacing="0.9">Atlantic</text>
<text x="580.5" y="370.7" font-size="5.2" fill="#33739a" text-anchor="middle" font-weight="700" letter-spacing="0.9">Ocean</text>
<text x="646.8" y="529.6" font-size="5.2" fill="#33739a" text-anchor="middle" font-weight="700" letter-spacing="0.9">South</text>
<text x="646.8" y="535.4" font-size="5.2" fill="#33739a" text-anchor="middle" font-weight="700" letter-spacing="0.9">Atlantic</text>
<text x="646.8" y="541.2" font-size="5.2" fill="#33739a" text-anchor="middle" font-weight="700" letter-spacing="0.9">Ocean</text>
<text x="229.4" y="281.0" font-size="4.2" fill="#33739a" text-anchor="middle" font-weight="400" letter-spacing="0.1">Bering Sea</text>
<text x="556.3" y="279.0" font-size="4.2" fill="#33739a" text-anchor="middle" font-weight="400" letter-spacing="0.1">Labrador Sea</text>
<text x="467.1" y="267.4" font-size="4.2" fill="#33739a" text-anchor="middle" font-weight="400" letter-spacing="0.1">Hudson Bay</text>
<text x="692.4" y="213.0" font-size="4.2" fill="#33739a" text-anchor="middle" font-weight="400" letter-spacing="0.1">Norwegian Sea</text>
<text x="493.2" y="420.6" font-size="4.2" fill="#33739a" text-anchor="middle" font-weight="400" letter-spacing="0.1">Caribbean Sea</text>
<text x="693.9" y="449.0" font-size="4.2" fill="#33739a" text-anchor="middle" font-weight="400" letter-spacing="0.1">Gulf of Guinea</text>
<text x="163.2" y="508.7" font-size="4.2" fill="#33739a" text-anchor="middle" font-weight="400" letter-spacing="0.1">Coral Sea</text>
<text x="174.6" y="572.2" font-size="4.2" fill="#33739a" text-anchor="middle" font-weight="400" letter-spacing="0.1">Tasman Sea</text>
<text x="481.0" y="225.7" font-size="4.2" fill="#33739a" text-anchor="middle" font-weight="400" letter-spacing="0.1">Northwestern</text>
<text x="481.0" y="230.5" font-size="4.2" fill="#33739a" text-anchor="middle" font-weight="400" letter-spacing="0.1">Passages</text>
<text x="454.7" y="388.8" font-size="4.6" fill="#33739a" text-anchor="middle" font-weight="400" letter-spacing="0.1">Gulf of</text>
<text x="454.7" y="394.0" font-size="4.6" fill="#33739a" text-anchor="middle" font-weight="400" letter-spacing="0.1">Mexico</text>
<text x="398.7" y="265.2" font-size="5.4" fill="#e8eaec" text-anchor="middle" font-weight="400" >Canada</text>
<text x="430.2" y="347.9" font-size="5" fill="#e8eaec" text-anchor="middle" font-weight="400" >United States</text>
<text x="567.0" y="232.9" font-size="5.2" fill="#e8eaec" text-anchor="middle" font-weight="400" >Greenland</text>
<text x="422.0" y="395.8" font-size="4.8" fill="#e8eaec" text-anchor="middle" font-weight="400" >Mexico</text>
<text x="454.1" y="417.5" font-size="4.2" fill="#e8eaec" text-anchor="middle" font-weight="400" >Guatemala</text>
<text x="471.1" y="426.3" font-size="4.2" fill="#e8eaec" text-anchor="middle" font-weight="400" >Nicaragua</text>
<text x="482.8" y="402.1" font-size="4.2" fill="#e8eaec" text-anchor="middle" font-weight="400" >Cuba</text>
<text x="515.3" y="435.9" font-size="4.8" fill="#e8eaec" text-anchor="middle" font-weight="400" >Venezuela</text>
<text x="535.2" y="441.3" font-size="3.8" fill="#e8eaec" text-anchor="middle" font-weight="400" >Guyana</text>
<text x="542.8" y="447.5" font-size="3.8" fill="#e8eaec" text-anchor="middle" font-weight="400" >Suriname</text>
<text x="482.7" y="461.8" font-size="4.2" fill="#e8eaec" text-anchor="middle" font-weight="400" >Ecuador</text>
<text x="542.3" y="480.5" font-size="5" fill="#e8eaec" text-anchor="middle" font-weight="400" >Brazil</text>
<text x="519.6" y="502.0" font-size="4.6" fill="#e8eaec" text-anchor="middle" font-weight="400" >Bolivia</text>
<text x="535.2" y="519.6" font-size="4.6" fill="#e8eaec" text-anchor="middle" font-weight="400" >Paraguay</text>
<text x="541.4" y="546.8" font-size="4" fill="#e8eaec" text-anchor="middle" font-weight="400" >Uruguay</text>
<text x="518.2" y="554.5" font-size="4.8" fill="#e8eaec" text-anchor="middle" font-weight="400" >Argentina</text>
<text x="641.5" y="238.2" font-size="4.6" fill="#e8eaec" text-anchor="middle" font-weight="400" >Iceland</text>
<text x="727.2" y="241.5" font-size="4.6" fill="#e8eaec" text-anchor="middle" font-weight="400" >Sweden</text>
<text x="708.0" y="260.0" font-size="4.4" fill="#e8eaec" text-anchor="middle" font-weight="400" >Norway</text>
<text x="756.0" y="255.5" font-size="4.4" fill="#e8eaec" text-anchor="middle" font-weight="400" >Finland</text>
<text x="710.0" y="285.2" font-size="3.8" fill="#e8eaec" text-anchor="middle" font-weight="400" >Denmark</text>
<text x="683.0" y="287.9" font-size="4.6" fill="#e8eaec" text-anchor="middle" font-weight="400" >United</text>
<text x="683.0" y="292.7" font-size="4.6" fill="#e8eaec" text-anchor="middle" font-weight="400" >Kingdom</text>
<text x="660.1" y="298.1" font-size="4.4" fill="#e8eaec" text-anchor="middle" font-weight="400" >Ireland</text>
<text x="732.4" y="298.8" font-size="5" fill="#e8eaec" text-anchor="middle" font-weight="400" >Poland</text>
<text x="709.0" y="304.4" font-size="4.4" fill="#e8eaec" text-anchor="middle" font-weight="400" >Germany</text>
<text x="721.3" y="317.2" font-size="3.8" fill="#e8eaec" text-anchor="middle" font-weight="400" >Austria</text>
<text x="690.9" y="323.7" font-size="4.6" fill="#e8eaec" text-anchor="middle" font-weight="400" >France</text>
<text x="716.1" y="336.0" font-size="4.6" fill="#e8eaec" text-anchor="middle" font-weight="400" >Italy</text>
<text x="758.0" y="326.8" font-size="4.6" fill="#e8eaec" text-anchor="middle" font-weight="400" >Romania</text>
<text x="741.9" y="348.6" font-size="4.6" fill="#e8eaec" text-anchor="middle" font-weight="400" >Greece</text>
<text x="681.0" y="342.7" font-size="4.6" fill="#e8eaec" text-anchor="middle" font-weight="400" >Spain</text>
<text x="662.7" y="352.9" font-size="4.6" fill="#e8eaec" text-anchor="middle" font-weight="400" >Portugal</text>
<text x="708.9" y="365.9" font-size="4.2" fill="#e8eaec" text-anchor="middle" font-weight="400" >Tunisia</text>
<text x="668.2" y="372.9" font-size="4.6" fill="#e8eaec" text-anchor="middle" font-weight="400" >Morocco</text>
<text x="691.5" y="383.9" font-size="4.8" fill="#e8eaec" text-anchor="middle" font-weight="400" >Algeria</text>
<text x="728.7" y="386.8" font-size="4.8" fill="#e8eaec" text-anchor="middle" font-weight="400" >Libya</text>
<text x="651.1" y="390.7" font-size="3.8" fill="#e8eaec" text-anchor="middle" font-weight="400" >Western</text>
<text x="651.1" y="395.2" font-size="3.8" fill="#e8eaec" text-anchor="middle" font-weight="400" >Sahara</text>
<text x="655.5" y="408.8" font-size="4.6" fill="#e8eaec" text-anchor="middle" font-weight="400" >Mauritania</text>
<text x="680.2" y="412.1" font-size="4.6" fill="#e8eaec" text-anchor="middle" font-weight="400" >Mali</text>
<text x="708.3" y="413.6" font-size="4.6" fill="#e8eaec" text-anchor="middle" font-weight="400" >Niger</text>
<text x="732.6" y="419.9" font-size="4.6" fill="#e8eaec" text-anchor="middle" font-weight="400" >Chad</text>
<text x="656.9" y="431.8" font-size="3.8" fill="#e8eaec" text-anchor="middle" font-weight="400" >Guinea</text>
<text x="678.3" y="423.9" font-size="3.6" fill="#e8eaec" text-anchor="middle" font-weight="400" >Burkina</text>
<text x="678.3" y="427.9" font-size="3.6" fill="#e8eaec" text-anchor="middle" font-weight="400" >Faso</text>
<text x="678.3" y="439.1" font-size="3.6" fill="#e8eaec" text-anchor="middle" font-weight="400" >Ghana</text>
<text x="708.0" y="433.9" font-size="4.4" fill="#e8eaec" text-anchor="middle" font-weight="400" >Nigeria</text>
<text x="760.0" y="431.6" font-size="4.4" fill="#e8eaec" text-anchor="middle" font-weight="400" >Sudan</text>
<text x="714.1" y="459.6" font-size="3.8" fill="#e8eaec" text-anchor="middle" font-weight="400" >Gabon</text>
<text x="744.2" y="465.7" font-size="4.4" fill="#e8eaec" text-anchor="middle" font-weight="400" >DRC</text>
<text x="729.7" y="490.2" font-size="4.4" fill="#e8eaec" text-anchor="middle" font-weight="400" >Angola</text>
<text x="760.0" y="492.9" font-size="4.4" fill="#e8eaec" text-anchor="middle" font-weight="400" >Zambia</text>
<text x="724.8" y="508.8" font-size="4.4" fill="#e8eaec" text-anchor="middle" font-weight="400" >Namibia</text>
<text x="752.0" y="516.4" font-size="4.2" fill="#e8eaec" text-anchor="middle" font-weight="400" >Botswana</text>
<text x="756.0" y="541.3" font-size="4.4" fill="#e8eaec" text-anchor="middle" font-weight="400" >South Africa</text>
<text x="760.0" y="451.6" font-size="4.4" fill="#e8eaec" text-anchor="middle" font-weight="400" >Somalia</text>
<text x="205.5" y="574.5" font-size="4.3" fill="#e8eaec" text-anchor="middle" font-weight="400" >New</text>
<text x="205.5" y="579.5" font-size="4.3" fill="#e8eaec" text-anchor="middle" font-weight="400" >Zealand</text>
<text x="298.4" y="238.8" font-size="3.4" fill="#8696a3" text-anchor="middle" font-weight="400" >AK</text>
<text x="327.0" y="244.3" font-size="3.4" fill="#8696a3" text-anchor="middle" font-weight="400" >YT</text>
<text x="378.5" y="244.8" font-size="3.4" fill="#8696a3" text-anchor="middle" font-weight="400" >NT</text>
<text x="434.0" y="214.3" font-size="3.4" fill="#8696a3" text-anchor="middle" font-weight="400" >NU</text>
<text x="365.5" y="291.0" font-size="3.4" fill="#8696a3" text-anchor="middle" font-weight="400" >BC</text>
<text x="390.0" y="282.8" font-size="3.4" fill="#8696a3" text-anchor="middle" font-weight="400" >AB</text>
<text x="410.0" y="283.3" font-size="3.4" fill="#8696a3" text-anchor="middle" font-weight="400" >SK</text>
<text x="432.0" y="281.3" font-size="3.4" fill="#8696a3" text-anchor="middle" font-weight="400" >MB</text>
<text x="465.0" y="295.3" font-size="3.4" fill="#8696a3" text-anchor="middle" font-weight="400" >ON</text>
<text x="497.0" y="301.3" font-size="3.4" fill="#8696a3" text-anchor="middle" font-weight="400" >QC</text>
<text x="526.0" y="291.3" font-size="3.4" fill="#8696a3" text-anchor="middle" font-weight="400" >NL</text>
<text x="505.0" y="322.3" font-size="3.4" fill="#8696a3" text-anchor="middle" font-weight="400" >NB</text>
<text x="513.0" y="324.3" font-size="3.4" fill="#8696a3" text-anchor="middle" font-weight="400" >NS</text>
<text x="517.0" y="317.3" font-size="3.4" fill="#8696a3" text-anchor="middle" font-weight="400" >PE</text>
<text x="371.0" y="310.3" font-size="3.4" fill="#8696a3" text-anchor="middle" font-weight="400" >WA</text>
<text x="377.0" y="333.8" font-size="3.4" fill="#8696a3" text-anchor="middle" font-weight="400" >OR</text>
<text x="393.0" y="334.3" font-size="3.4" fill="#8696a3" text-anchor="middle" font-weight="400" >ID</text>
<text x="405.0" y="321.3" font-size="3.4" fill="#8696a3" text-anchor="middle" font-weight="400" >MT</text>
<text x="428.0" y="320.3" font-size="3.4" fill="#8696a3" text-anchor="middle" font-weight="400" >ND</text>
<text x="428.0" y="330.3" font-size="3.4" fill="#8696a3" text-anchor="middle" font-weight="400" >SD</text>
<text x="443.0" y="324.3" font-size="3.4" fill="#8696a3" text-anchor="middle" font-weight="400" >MN</text>
<text x="456.0" y="328.3" font-size="3.4" fill="#8696a3" text-anchor="middle" font-weight="400" >WI</text>
<text x="467.0" y="329.3" font-size="3.4" fill="#8696a3" text-anchor="middle" font-weight="400" >MI</text>
<text x="385.0" y="347.3" font-size="3.4" fill="#8696a3" text-anchor="middle" font-weight="400" >NV</text>
<text x="398.0" y="349.3" font-size="3.4" fill="#8696a3" text-anchor="middle" font-weight="400" >UT</text>
<text x="409.0" y="335.3" font-size="3.4" fill="#8696a3" text-anchor="middle" font-weight="400" >WY</text>
<text x="430.0" y="341.3" font-size="3.4" fill="#8696a3" text-anchor="middle" font-weight="400" >NE</text>
<text x="445.0" y="339.3" font-size="3.4" fill="#8696a3" text-anchor="middle" font-weight="400" >IA</text>
<text x="457.0" y="344.3" font-size="3.4" fill="#8696a3" text-anchor="middle" font-weight="400" >IL</text>
<text x="464.0" y="346.3" font-size="3.4" fill="#8696a3" text-anchor="middle" font-weight="400" >IN</text>
<text x="473.0" y="343.3" font-size="3.4" fill="#8696a3" text-anchor="middle" font-weight="400" >OH</text>
<text x="485.0" y="338.3" font-size="3.4" fill="#8696a3" text-anchor="middle" font-weight="400" >PA</text>
<text x="495.0" y="334.3" font-size="3.4" fill="#8696a3" text-anchor="middle" font-weight="400" >NY</text>
<text x="382.0" y="353.3" font-size="3.4" fill="#8696a3" text-anchor="middle" font-weight="400" >CA</text>
<text x="399.0" y="364.3" font-size="3.4" fill="#8696a3" text-anchor="middle" font-weight="400" >AZ</text>
<text x="414.0" y="364.3" font-size="3.4" fill="#8696a3" text-anchor="middle" font-weight="400" >NM</text>
<text x="418.0" y="348.3" font-size="3.4" fill="#8696a3" text-anchor="middle" font-weight="400" >CO</text>
<text x="434.0" y="351.3" font-size="3.4" fill="#8696a3" text-anchor="middle" font-weight="400" >KS</text>
<text x="448.0" y="351.3" font-size="3.4" fill="#8696a3" text-anchor="middle" font-weight="400" >MO</text>
<text x="468.0" y="353.3" font-size="3.4" fill="#8696a3" text-anchor="middle" font-weight="400" >KY</text>
<text x="480.0" y="348.3" font-size="3.4" fill="#8696a3" text-anchor="middle" font-weight="400" >WV</text>
<text x="489.0" y="351.3" font-size="3.4" fill="#8696a3" text-anchor="middle" font-weight="400" >VA</text>
<text x="486.0" y="359.3" font-size="3.4" fill="#8696a3" text-anchor="middle" font-weight="400" >NC</text>
<text x="466.0" y="359.3" font-size="3.4" fill="#8696a3" text-anchor="middle" font-weight="400" >TN</text>
<text x="434.0" y="361.3" font-size="3.4" fill="#8696a3" text-anchor="middle" font-weight="400" >OK</text>
<text x="449.0" y="363.3" font-size="3.4" fill="#8696a3" text-anchor="middle" font-weight="400" >AR</text>
<text x="484.0" y="366.3" font-size="3.4" fill="#8696a3" text-anchor="middle" font-weight="400" >SC</text>
<text x="455.0" y="367.3" font-size="3.4" fill="#8696a3" text-anchor="middle" font-weight="400" >MS</text>
<text x="462.0" y="368.3" font-size="3.4" fill="#8696a3" text-anchor="middle" font-weight="400" >AL</text>
<text x="472.0" y="371.3" font-size="3.4" fill="#8696a3" text-anchor="middle" font-weight="400" >GA</text>
<text x="425.0" y="373.3" font-size="3.4" fill="#8696a3" text-anchor="middle" font-weight="400" >TX</text>
<text x="450.0" y="376.3" font-size="3.4" fill="#8696a3" text-anchor="middle" font-weight="400" >LA</text>
<text x="478.0" y="381.3" font-size="3.4" fill="#8696a3" text-anchor="middle" font-weight="400" >FL</text>
<text x="527.0" y="475.3" font-size="3.4" fill="#8696a3" text-anchor="middle" font-weight="400" >AM</text>
<text x="551.0" y="464.3" font-size="3.4" fill="#8696a3" text-anchor="middle" font-weight="400" >PA</text>
<text x="569.0" y="470.3" font-size="3.4" fill="#8696a3" text-anchor="middle" font-weight="400" >MA</text>
<text x="582.0" y="475.3" font-size="3.4" fill="#8696a3" text-anchor="middle" font-weight="400" >CE</text>
<text x="576.0" y="477.3" font-size="3.4" fill="#8696a3" text-anchor="middle" font-weight="400" >PI</text>
<text x="590.0" y="478.3" font-size="3.4" fill="#8696a3" text-anchor="middle" font-weight="400" >PE</text>
<text x="592.0" y="469.3" font-size="3.4" fill="#8696a3" text-anchor="middle" font-weight="400" >RN</text>
<text x="593.0" y="473.3" font-size="3.4" fill="#8696a3" text-anchor="middle" font-weight="400" >PB</text>
<text x="593.0" y="482.3" font-size="3.4" fill="#8696a3" text-anchor="middle" font-weight="400" >AL</text>
<text x="590.0" y="486.3" font-size="3.4" fill="#8696a3" text-anchor="middle" font-weight="400" >SE</text>
<text x="578.0" y="491.3" font-size="3.4" fill="#8696a3" text-anchor="middle" font-weight="400" >BA</text>
<text x="559.0" y="485.3" font-size="3.4" fill="#8696a3" text-anchor="middle" font-weight="400" >TO</text>
<text x="542.0" y="488.3" font-size="3.4" fill="#8696a3" text-anchor="middle" font-weight="400" >MT</text>
<text x="525.0" y="488.3" font-size="3.4" fill="#8696a3" text-anchor="middle" font-weight="400" >RO</text>
<text x="507.0" y="482.3" font-size="3.4" fill="#8696a3" text-anchor="middle" font-weight="400" >AC</text>
<text x="558.0" y="498.3" font-size="3.4" fill="#8696a3" text-anchor="middle" font-weight="400" >GO</text>
<text x="570.0" y="501.3" font-size="3.4" fill="#8696a3" text-anchor="middle" font-weight="400" >MG</text>
<text x="582.0" y="506.3" font-size="3.4" fill="#8696a3" text-anchor="middle" font-weight="400" >ES</text>
<text x="544.0" y="509.3" font-size="3.4" fill="#8696a3" text-anchor="middle" font-weight="400" >MS</text>
<text x="560.0" y="515.3" font-size="3.4" fill="#8696a3" text-anchor="middle" font-weight="400" >SP</text>
<text x="574.0" y="515.3" font-size="3.4" fill="#8696a3" text-anchor="middle" font-weight="400" >RJ</text>
<text x="553.0" y="521.3" font-size="3.4" fill="#8696a3" text-anchor="middle" font-weight="400" >PR</text>
<text x="556.0" y="529.3" font-size="3.4" fill="#8696a3" text-anchor="middle" font-weight="400" >SC</text>
<text x="547.0" y="536.3" font-size="3.4" fill="#8696a3" text-anchor="middle" font-weight="400" >RS</text>
<circle cx="302" cy="258" r="11.2" fill="#c9a035" fill-opacity="0.75"/>
<circle cx="302" cy="258" r="9.4" fill="#fbbc2c"/>
<text x="302.0" y="260.2" font-size="6.3" fill="#2a2206" text-anchor="middle" font-weight="400" >6</text>
<circle cx="341.3" cy="261" r="11.2" fill="#c9a035" fill-opacity="0.75"/>
<circle cx="341.3" cy="261" r="9.4" fill="#fbbc2c"/>
<text x="341.3" y="263.2" font-size="6.3" fill="#2a2206" text-anchor="middle" font-weight="400" >3</text>
<circle cx="412.4" cy="294.4" r="11.2" fill="#c9a035" fill-opacity="0.75"/>
<circle cx="412.4" cy="294.4" r="9.4" fill="#fbbc2c"/>
<text x="412.4" y="296.6" font-size="6.3" fill="#2a2206" text-anchor="middle" font-weight="400" >6</text>
<circle cx="372.4" cy="320" r="11.2" fill="#c9a035" fill-opacity="0.75"/>
<circle cx="372.4" cy="320" r="9.4" fill="#fbbc2c"/>
<text x="372.4" y="322.2" font-size="6.3" fill="#2a2206" text-anchor="middle" font-weight="400" >129</text>
<circle cx="413.7" cy="344.9" r="11.2" fill="#c9a035" fill-opacity="0.75"/>
<circle cx="413.7" cy="344.9" r="9.4" fill="#fbbc2c"/>
<text x="413.7" y="347.1" font-size="6.3" fill="#2a2206" text-anchor="middle" font-weight="400" >128</text>
<circle cx="467.6" cy="338.8" r="11.2" fill="#c9a035" fill-opacity="0.75"/>
<circle cx="467.6" cy="338.8" r="9.4" fill="#fbbc2c"/>
<text x="467.6" y="341.1" font-size="6.3" fill="#2a2206" text-anchor="middle" font-weight="400" >830</text>
<circle cx="496.1" cy="341.1" r="11.2" fill="#c9a035" fill-opacity="0.75"/>
<circle cx="496.1" cy="341.1" r="9.4" fill="#fbbc2c"/>
<text x="496.1" y="343.4" font-size="6.3" fill="#2a2206" text-anchor="middle" font-weight="400" >1385</text>
<circle cx="518.8" cy="358.3" r="11.2" fill="#c9a035" fill-opacity="0.75"/>
<circle cx="518.8" cy="358.3" r="9.4" fill="#fbbc2c"/>
<text x="518.8" y="360.6" font-size="6.3" fill="#2a2206" text-anchor="middle" font-weight="400" >10</text>
<circle cx="376.6" cy="357.3" r="11.2" fill="#c9a035" fill-opacity="0.75"/>
<circle cx="376.6" cy="357.3" r="9.4" fill="#fbbc2c"/>
<text x="376.6" y="359.6" font-size="6.3" fill="#2a2206" text-anchor="middle" font-weight="400" >355</text>
<circle cx="440.5" cy="373.5" r="11.2" fill="#c9a035" fill-opacity="0.75"/>
<circle cx="440.5" cy="373.5" r="9.4" fill="#fbbc2c"/>
<text x="440.5" y="375.8" font-size="6.3" fill="#2a2206" text-anchor="middle" font-weight="400" >297</text>
<circle cx="477.9" cy="387" r="11.2" fill="#c9a035" fill-opacity="0.75"/>
<circle cx="477.9" cy="387" r="9.4" fill="#fbbc2c"/>
<text x="477.9" y="389.2" font-size="6.3" fill="#2a2206" text-anchor="middle" font-weight="400" >176</text>
<circle cx="430.7" cy="395.1" r="11.2" fill="#c9a035" fill-opacity="0.75"/>
<circle cx="430.7" cy="395.1" r="9.4" fill="#fbbc2c"/>
<text x="430.7" y="397.4" font-size="6.3" fill="#2a2206" text-anchor="middle" font-weight="400" >2</text>
<circle cx="516.2" cy="408.5" r="11.2" fill="#c9a035" fill-opacity="0.75"/>
<circle cx="516.2" cy="408.5" r="9.4" fill="#fbbc2c"/>
<text x="516.2" y="410.8" font-size="6.3" fill="#2a2206" text-anchor="middle" font-weight="400" >8</text>
<circle cx="281.2" cy="401.3" r="11.2" fill="#c9a035" fill-opacity="0.75"/>
<circle cx="281.2" cy="401.3" r="9.4" fill="#fbbc2c"/>
<text x="281.2" y="403.6" font-size="6.3" fill="#2a2206" text-anchor="middle" font-weight="400" >9</text>
<circle cx="494.7" cy="444.6" r="11.2" fill="#c9a035" fill-opacity="0.75"/>
<circle cx="494.7" cy="444.6" r="9.4" fill="#fbbc2c"/>
<text x="494.7" y="446.9" font-size="6.3" fill="#2a2206" text-anchor="middle" font-weight="400" >2</text>
<circle cx="487.5" cy="476.2" r="11.2" fill="#c9a035" fill-opacity="0.75"/>
<circle cx="487.5" cy="476.2" r="9.4" fill="#fbbc2c"/>
<text x="487.5" y="478.4" font-size="6.3" fill="#2a2206" text-anchor="middle" font-weight="400" >2</text>
<circle cx="585.4" cy="466" r="11.2" fill="#c9a035" fill-opacity="0.75"/>
<circle cx="585.4" cy="466" r="9.4" fill="#fbbc2c"/>
<text x="585.4" y="468.2" font-size="6.3" fill="#2a2206" text-anchor="middle" font-weight="400" >4</text>
<circle cx="564.1" cy="519.9" r="11.2" fill="#c9a035" fill-opacity="0.75"/>
<circle cx="564.1" cy="519.9" r="9.4" fill="#fbbc2c"/>
<text x="564.1" y="522.1" font-size="6.3" fill="#2a2206" text-anchor="middle" font-weight="400" >68</text>
<circle cx="503.4" cy="536.3" r="11.2" fill="#c9a035" fill-opacity="0.75"/>
<circle cx="503.4" cy="536.3" r="9.4" fill="#fbbc2c"/>
<text x="503.4" y="538.5" font-size="6.3" fill="#2a2206" text-anchor="middle" font-weight="400" >3</text>
<circle cx="211.6" cy="558.2" r="11.2" fill="#c9a035" fill-opacity="0.75"/>
<circle cx="211.6" cy="558.2" r="9.4" fill="#fbbc2c"/>
<text x="211.6" y="560.5" font-size="6.3" fill="#2a2206" text-anchor="middle" font-weight="400" >20</text>
<circle cx="631.7" cy="229.5" r="11.2" fill="#c9a035" fill-opacity="0.75"/>
<circle cx="631.7" cy="229.5" r="9.4" fill="#fbbc2c"/>
<text x="631.7" y="231.8" font-size="6.3" fill="#2a2206" text-anchor="middle" font-weight="400" >4</text>
<circle cx="698.8" cy="269.2" r="11.2" fill="#c9a035" fill-opacity="0.75"/>
<circle cx="698.8" cy="269.2" r="9.4" fill="#fbbc2c"/>
<text x="698.8" y="271.4" font-size="6.3" fill="#2a2206" text-anchor="middle" font-weight="400" >3</text>
<circle cx="681.6" cy="301" r="11.2" fill="#c9a035" fill-opacity="0.75"/>
<circle cx="681.6" cy="301" r="9.4" fill="#fbbc2c"/>
<text x="681.6" y="303.2" font-size="6.3" fill="#2a2206" text-anchor="middle" font-weight="400" >589</text>
<circle cx="661.7" cy="339.1" r="11.2" fill="#c9a035" fill-opacity="0.75"/>
<circle cx="661.7" cy="339.1" r="9.4" fill="#fbbc2c"/>
<text x="661.7" y="341.4" font-size="6.3" fill="#2a2206" text-anchor="middle" font-weight="400" >18</text>
<circle cx="688.9" cy="339.5" r="11.2" fill="#c9a035" fill-opacity="0.75"/>
<circle cx="688.9" cy="339.5" r="9.4" fill="#fbbc2c"/>
<text x="688.9" y="341.8" font-size="6.3" fill="#2a2206" text-anchor="middle" font-weight="400" >28</text>
<circle cx="692.8" cy="428.8" r="11.2" fill="#c9a035" fill-opacity="0.75"/>
<circle cx="692.8" cy="428.8" r="9.4" fill="#fbbc2c"/>
<text x="692.8" y="431.1" font-size="6.3" fill="#2a2206" text-anchor="middle" font-weight="400" >1</text>
</svg>
<div class="a" style="left:729px;top:194px;width:18px;height:18px;background:#fff;border-radius:1px"></div>
<svg class="a" style="left:729px;top:194px" width="18" height="18" viewBox="0 0 18 18"><path d="M5,7.5 V5 H7.5 M10.5,5 H13 V7.5 M13,10.5 V13 H10.5 M7.5,13 H5 V10.5" fill="none" stroke="#444" stroke-width="1.1"/></svg>
<div class="a" style="left:728.9px;top:576.5px;width:18px;height:18px;background:#fff;border:1px solid #4a90d9;box-shadow:0 0 0 0.5px #9cc4ee"></div>
<svg class="a" style="left:728.9px;top:576.5px" width="18" height="18" viewBox="0 0 18 18"><path d="M9,4.3 V13.7 M4.3,9 H13.7" stroke="#3a3a3a" stroke-width="1.5"/></svg>
<div class="a" style="left:729px;top:596px;width:18px;height:14px;background:#fff"></div>
<svg class="a" style="left:729px;top:596px" width="18" height="14" viewBox="0 0 18 14"><path d="M4.5,8 H13.5" stroke="#3a3a3a" stroke-width="1.5"/></svg>
</body></html>
